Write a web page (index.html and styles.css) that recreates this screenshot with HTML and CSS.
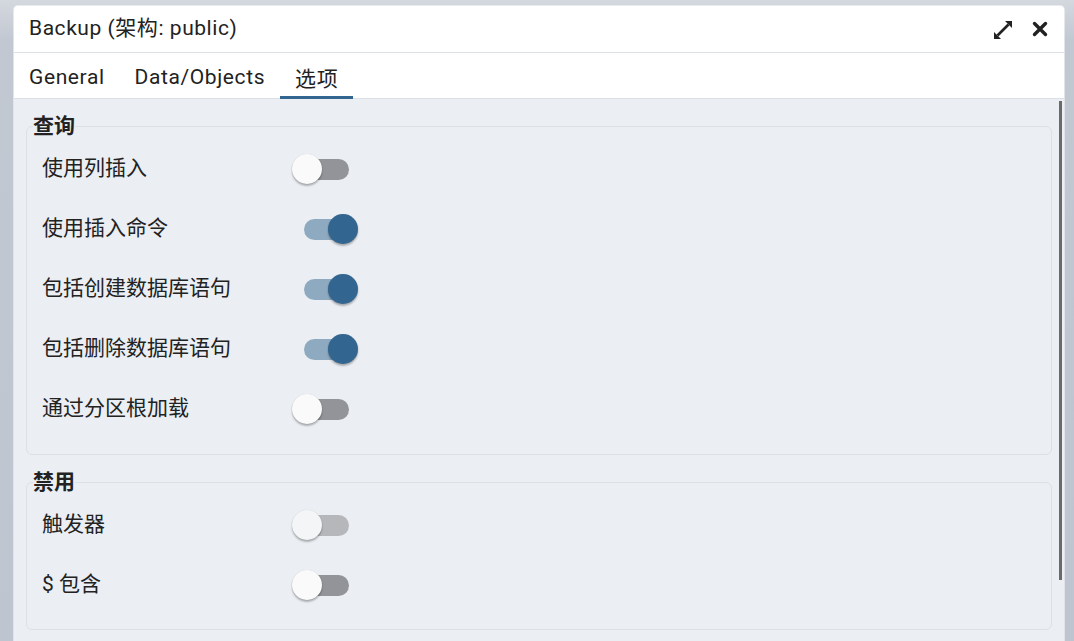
FILE: index.html
```html
<!DOCTYPE html>
<html lang="zh">
<head>
<meta charset="utf-8">
<title>Backup</title>
<link rel="stylesheet" href="styles.css">
</head>
<body>
<div class="dialog">
  <div class="titlebar">
    <div class="title">Backup (架构: public)</div>
    <div class="title-actions">
      <svg class="icon-expand" viewBox="0 0 20 20" width="20" height="20" aria-hidden="true">
        <line x1="4.5" y1="15.5" x2="15.5" y2="4.5" stroke="#222" stroke-width="2.6"/>
        <polygon points="19,1 19,8 12,1" fill="#222"/>
        <polygon points="1,19 1,12 8,19" fill="#222"/>
      </svg>
      <svg class="icon-close" viewBox="0 0 16 16" width="16" height="16" aria-hidden="true">
        <path d="M2.5 2.5 L13.5 13.5 M13.5 2.5 L2.5 13.5" stroke="#222" stroke-width="3.4" stroke-linecap="round"/>
      </svg>
    </div>
  </div>
  <div class="tabs">
    <div class="tab">General</div>
    <div class="tab">Data/Objects</div>
    <div class="tab active">选项</div>
  </div>
  <div class="content">
    <fieldset class="group">
      <legend>查询</legend>
      <div class="row"><span class="label">使用列插入</span><span class="switch"><span class="track"></span><span class="thumb"></span></span></div>
      <div class="row"><span class="label">使用插入命令</span><span class="switch on"><span class="track"></span><span class="thumb"></span></span></div>
      <div class="row"><span class="label">包括创建数据库语句</span><span class="switch on"><span class="track"></span><span class="thumb"></span></span></div>
      <div class="row"><span class="label">包括删除数据库语句</span><span class="switch on"><span class="track"></span><span class="thumb"></span></span></div>
      <div class="row"><span class="label">通过分区根加载</span><span class="switch"><span class="track"></span><span class="thumb"></span></span></div>
    </fieldset>
    <fieldset class="group second">
      <legend>禁用</legend>
      <div class="row"><span class="label">触发器</span><span class="switch disabled"><span class="track"></span><span class="thumb"></span></span></div>
      <div class="row"><span class="label">$ 包含</span><span class="switch"><span class="track"></span><span class="thumb"></span></span></div>
    </fieldset>
    <div class="scrollbar"></div>
  </div>
</div>
</body>
</html>
```

FILE: styles.css
```css
html, body {
  margin: 0;
  padding: 0;
  height: 100%;
  overflow: hidden;
}
body {
  background: linear-gradient(to bottom, #d4d8df 0, #c2c8d2 40px, #bfc5d0 100%);
  font-family: Roboto, "Noto Sans CJK SC", sans-serif;
  color: #222222;
  padding: 6px 10px 0 14px;
  box-sizing: border-box;
}
.dialog {
  height: 635px;
  background: #ebeef3;
  display: flex;
  flex-direction: column;
  border-radius: 4px 4px 0 0;
  box-shadow: 0 0 0 1px rgba(255,255,255,0.5);
  overflow: hidden;
}
.titlebar {
  height: 46px;
  background: #ffffff;
  border-bottom: 1px solid #dde0e6;
  display: flex;
  align-items: center;
  justify-content: space-between;
  padding: 0 16px 0 15px;
  flex: none;
}
.title {
  font-size: 21px;
  line-height: 1;
  padding-bottom: 2px;
  letter-spacing: 0.55px;
}
.title-actions {
  display: flex;
  align-items: center;
  gap: 19px;
}
.icon-expand { display: block; margin-top: 2px; }
.icon-close { display: block; width: 16px; height: 16px; }
.tabs {
  height: 45px;
  background: #ffffff;
  border-bottom: 1px solid #dde0e6;
  display: flex;
  flex: none;
}
.tab {
  font-size: 21px;
  padding: 5px 15px 0 15px;
  display: flex;
  align-items: center;
  border-bottom: 3px solid transparent;
  margin-bottom: -1px;
  letter-spacing: 0.6px;
}
.tab.active {
  border-bottom-color: #326690;
}
.content {
  flex: 1;
  position: relative;
  padding: 16px 12px 0 12px;
  overflow: hidden;
}
.group {
  margin: 0;
  border: 1px solid #dde0e6;
  border-radius: 6px;
  padding: 0 6px 16px 6px;
  min-width: 0;
}
.group.second {
  margin-top: 16px;
  padding-bottom: 15px;
}
.group legend {
  padding: 0;
  font-size: 21px;
  font-weight: bold;
  line-height: 23px;
  color: #222;
}
.row {
  height: 60px;
  display: flex;
  align-items: center;
  padding-left: 9px;
}
.label {
  width: 250px;
  font-size: 21px;
  line-height: 1;
  color: #222;
}
.switch {
  display: grid;
  width: 66px;
  height: 30px;
  margin-top: 2px;
}
.track {
  grid-area: 1 / 1;
  align-self: center;
  margin-left: 12px;
  width: 45px;
  height: 21px;
  border-radius: 11px;
  background: #939499;
}
.thumb {
  grid-area: 1 / 1;
  width: 30px;
  height: 30px;
  border-radius: 50%;
  background: #fafafa;
  box-shadow: 0 2px 2px rgba(0,0,0,0.28), 0 0 1px rgba(0,0,0,0.15);
}
.switch.on .track { background: #8eaac1; }
.switch.on .thumb {
  margin-left: 36px;
  background: #326690;
}
.switch.disabled .track { background: #b6b7bb; }
.switch.disabled .thumb { background: #f4f5f7; }
.scrollbar {
  position: absolute;
  right: 2px;
  top: 2px;
  width: 3px;
  height: 479px;
  background: #6a6a6a;
}
```
